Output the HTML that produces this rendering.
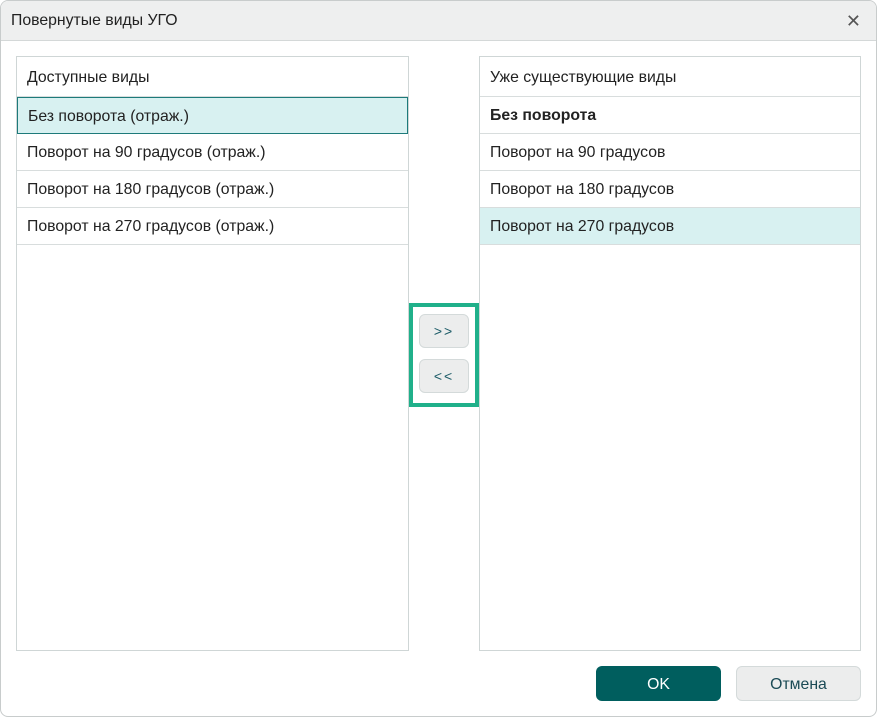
<!DOCTYPE html>
<html><head><meta charset="utf-8"><style>
*{box-sizing:border-box;margin:0;padding:0}
body{width:877px;height:717px;background:#fff;font-family:"Liberation Sans",sans-serif;font-size:15.8px;color:#222;position:relative;overflow:hidden}
.win{position:absolute;left:0;top:0;width:877px;height:717px;border:1px solid #c8cccc;border-radius:8px;overflow:hidden;background:#fff}
.title{height:40px;background:#eeefef;border-bottom:1px solid #d4d8d8;padding:11px 10px;font-size:15.8px}
.x{position:absolute;right:15px;top:10px;font-size:18px;color:#555;font-weight:300}
.panel{position:absolute;top:55px;height:595px;border:1px solid #cfd6d6;background:#fff}
.row{height:37px;border-bottom:1px solid #d8dddd;padding:10px 10px;white-space:nowrap}
.hdr{height:40px;padding:12px 10px}
.sel{background:#d8f1f1;border:1px solid #1d7a7a}
.frame{position:absolute;left:408px;top:302px;width:70px;height:104px;border:4px solid #20b08a}
.btn{position:absolute;left:6px;width:50px;height:34px;border:1px solid #d4dada;border-radius:6px;background:#eceded;text-align:center;line-height:33px;font-size:14px;color:#1a5a66;letter-spacing:2px}
.ok{position:absolute;left:595px;top:665px;width:125px;height:35px;background:#005e5e;border-radius:6px;color:#fff;text-align:center;line-height:37px;font-size:15.8px}
.cn{position:absolute;left:735px;top:665px;width:125px;height:35px;background:#eceded;border:1px solid #d4dada;border-radius:6px;color:#1a4a55;text-align:center;line-height:35px;font-size:15.8px}
</style></head><body><div class="win">
<div class="title">Повернутые виды УГО</div><div class="x">✕</div>
<div class="panel" style="left:15px;width:393px">
<div class="row hdr">Доступные виды</div>
<div class="row sel">Без поворота (отраж.)</div>
<div class="row">Поворот на 90 градусов (отраж.)</div>
<div class="row">Поворот на 180 градусов (отраж.)</div>
<div class="row">Поворот на 270 градусов (отраж.)</div>
</div>
<div class="frame"><div class="btn" style="top:7px">&gt;&gt;</div><div class="btn" style="top:52px">&lt;&lt;</div></div>
<div class="panel" style="left:478px;width:382px">
<div class="row hdr">Уже существующие виды</div>
<div class="row" style="font-weight:bold">Без поворота</div>
<div class="row">Поворот на 90 градусов</div>
<div class="row">Поворот на 180 градусов</div>
<div class="row" style="background:#d8f1f1">Поворот на 270 градусов</div>
</div>
<div class="ok">OK</div><div class="cn">Отмена</div>
</div></body></html>
